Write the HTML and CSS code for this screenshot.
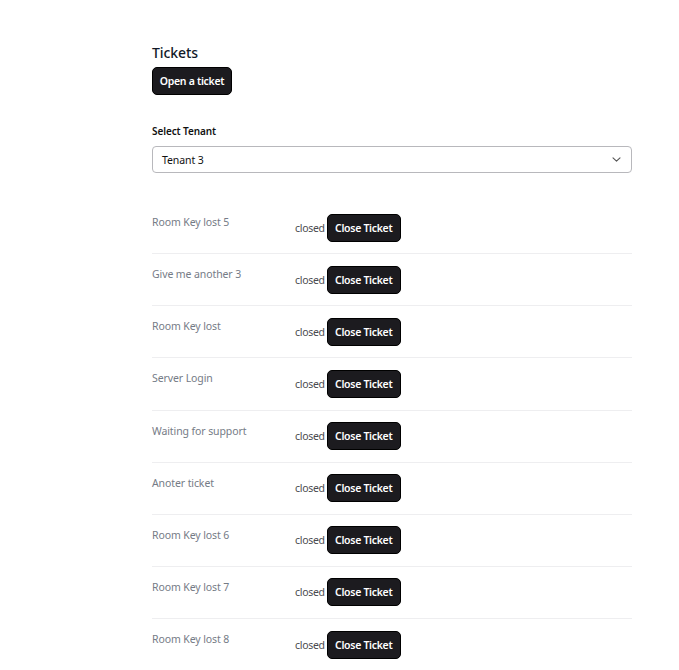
FILE: index.html
```html
<!DOCTYPE html>
<html lang="en">
<head>
<meta charset="utf-8">
<title>Tickets</title>
<link rel="stylesheet" href="styles.css">
</head>
<body>
<main class="page">
  <h1 class="title">Tickets</h1>
  <button class="btn btn-open">Open a ticket</button>

  <div class="field">
    <label class="label" for="tenant">Select Tenant</label>
    <div class="select">
      <span class="select-value">Tenant 3</span>
      <svg class="chevron" width="9" height="5" viewBox="0 0 9 5"><path d="M1 0.8l3.5 3.4 3.5-3.4" fill="none" stroke="#555" stroke-width="1.1" stroke-linecap="round" stroke-linejoin="round"/></svg>
    </div>
  </div>

  <ul class="tickets">
    <li class="ticket"><span class="ticket-name">Room Key lost 5</span><span class="status">closed</span><button class="btn btn-close">Close Ticket</button></li>
    <li class="ticket"><span class="ticket-name">Give me another 3</span><span class="status">closed</span><button class="btn btn-close">Close Ticket</button></li>
    <li class="ticket"><span class="ticket-name">Room Key lost</span><span class="status">closed</span><button class="btn btn-close">Close Ticket</button></li>
    <li class="ticket"><span class="ticket-name">Server Login</span><span class="status">closed</span><button class="btn btn-close">Close Ticket</button></li>
    <li class="ticket"><span class="ticket-name">Waiting for support</span><span class="status">closed</span><button class="btn btn-close">Close Ticket</button></li>
    <li class="ticket"><span class="ticket-name">Anoter ticket</span><span class="status">closed</span><button class="btn btn-close">Close Ticket</button></li>
    <li class="ticket"><span class="ticket-name">Room Key lost 6</span><span class="status">closed</span><button class="btn btn-close">Close Ticket</button></li>
    <li class="ticket"><span class="ticket-name">Room Key lost 7</span><span class="status">closed</span><button class="btn btn-close">Close Ticket</button></li>
    <li class="ticket"><span class="ticket-name">Room Key lost 8</span><span class="status">closed</span><button class="btn btn-close">Close Ticket</button></li>
  </ul>
</main>
</body>
</html>
```
FILE: styles.css
```css
* { box-sizing: border-box; }
html, body { margin: 0; padding: 0; background: #fff; }
body {
  font-family: "Noto Sans", "Open Sans", sans-serif;
  color: #111;
}
.page {
  width: 480px;
  margin-left: 152px;
  padding-top: 44px;
}
.title {
  margin: 0;
  font-size: 14px;
  font-weight: 500;
  line-height: 18px;
  color: #111827;
  letter-spacing: -0.1px;
}
.btn {
  font-family: inherit;
  background: #1c1b1f;
  color: #fff;
  border: 1px solid #000;
  border-radius: 5px;
  font-weight: 600;
  font-size: 10.5px;
  letter-spacing: -0.3px;
  cursor: pointer;
  height: 28px;
  padding: 0;
}
.btn-open {
  margin-top: 5px;
  width: 80px;
}
.field { margin-top: 29px; }
.label {
  display: block;
  font-size: 10px;
  font-weight: 600;
  color: #111;
  line-height: 14px;
  letter-spacing: -0.1px;
}
.select {
  margin-top: 8px;
  height: 27px;
  border: 1px solid #b8b8bc;
  border-radius: 4px;
  display: flex;
  align-items: center;
  justify-content: space-between;
  padding: 0 10px 0 9px;
}
.select-value {
  font-size: 10.5px;
  color: #111;
  letter-spacing: -0.1px;
}
.chevron { display: block; }
.tickets {
  list-style: none;
  margin: 29px 0 0;
  padding: 0;
}
.ticket {
  display: flex;
  align-items: center;
  padding: 12px 0;
  border-bottom: 1px solid #eeeef0;
  height: 52.125px;
}
.ticket-name {
  width: 143px;
  align-self: flex-start;
  font-size: 10.5px;
  line-height: 16px;
  color: #757b86;
  letter-spacing: -0.1px;
}
.status {
  font-size: 10.5px;
  color: #4b4b4f;
  margin-right: 2px;
  letter-spacing: -0.3px;
}
.btn-close {
  width: 74px;
}
```
